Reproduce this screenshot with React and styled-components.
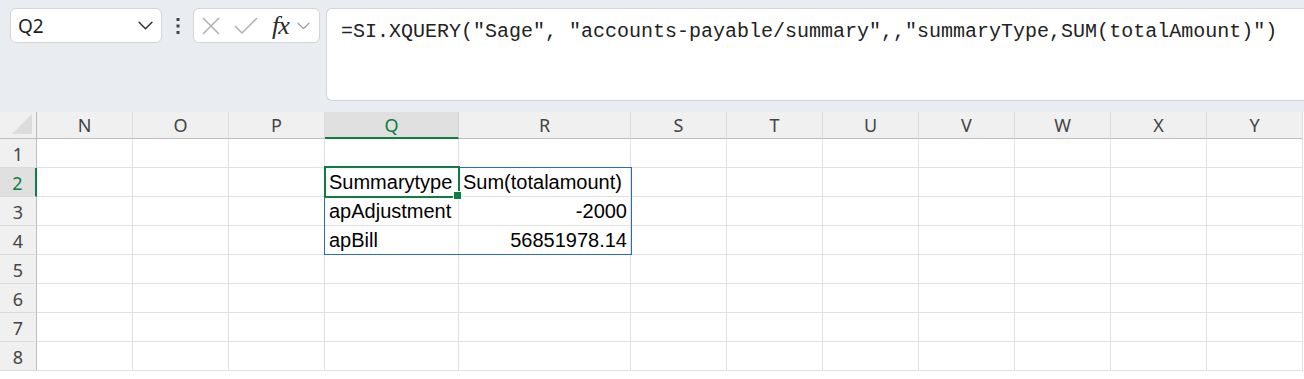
import React from "react";
import styled, { createGlobalStyle } from "styled-components";

const GlobalStyle = createGlobalStyle`
  html, body {
    margin: 0;
    padding: 0;
    background: #ffffff;
    overflow: hidden;
  }
  * { box-sizing: border-box; }
`;

const Page = styled.div`
  width: 1304px;
  height: 379px;
  overflow: hidden;
  font-family: "Noto Sans", "Open Sans", sans-serif;
`;

const TopBar = styled.div`
  height: 112px;
  background: #e9ecf0;
  display: flex;
  align-items: flex-start;
  padding: 8px 0 0 10px;
`;

const Box = styled.div`
  background: #fff;
  border: 1px solid #d2d4d7;
  border-radius: 6px;
  height: 35px;
  display: flex;
  align-items: center;
`;

const NameBox = styled(Box)`
  width: 152px;
  padding: 0 8px 0 7px;
  justify-content: space-between;
  font-size: 19px;
  color: #1f1f1f;
`;

const Dots = styled.div`
  width: 31px;
  height: 35px;
  display: flex;
  align-items: center;
  justify-content: center;
`;

const FxBox = styled(Box)`
  width: 127px;
  padding: 0 0 0 8px;
`;

const FxLabel = styled.span`
  font-family: "Liberation Serif", "DejaVu Serif", serif;
  font-style: italic;
  font-size: 26px;
  color: #2b2b2b;
  margin: 0 8px 0 14px;
  letter-spacing: -1px;
  line-height: 1;
`;

const FormulaInput = styled(Box)`
  margin-left: 6px;
  flex: 1;
  height: 93px;
  border-right: none;
  border-radius: 6px 0 0 6px;
  align-items: flex-start;
  padding: 11px 0 0 14px;
  font-family: "Liberation Mono", "DejaVu Sans Mono", monospace;
  font-size: 20px;
  color: #222;
  white-space: pre;
`;

const SheetWrap = styled.div`
  position: relative;
`;

const Grid = styled.div`
  display: grid;
  grid-template-columns: 37px 96px 96px 96px 134px 172px 96px 96px 96px 96px 96px 96px 96px;
  grid-template-rows: 27px repeat(8, 29px);
`;

const Corner = styled.div`
  background: #f0f0f0;
  border-right: 1px solid #bdbdbd;
  border-bottom: 1px solid #bdbdbd;
  position: relative;
  &::after {
    content: "";
    position: absolute;
    right: 4px;
    bottom: 4px;
    border-style: solid;
    border-width: 0 0 20px 20px;
    border-color: transparent transparent #dcdcdc transparent;
  }
`;

const ColHead = styled.div`
  background: ${(p) => (p.$active ? "#e0e0e0" : "#f0f0f0")};
  border-right: 1px solid ${(p) => (p.$active ? "#d4d4d4" : "#dcdcdc")};
  border-bottom: ${(p) => (p.$active ? "2px solid #107c41" : "1px solid #bdbdbd")};
  color: ${(p) => (p.$active ? "#107c41" : "#444")};
  font-size: 18px;
  display: flex;
  align-items: center;
  justify-content: center;
  padding-top: ${(p) => (p.$active ? "1px" : "0")};
`;

const RowHead = styled.div`
  background: ${(p) => (p.$active ? "#e0e0e0" : "#f0f0f0")};
  border-right: ${(p) => (p.$active ? "2px solid #107c41" : "1px solid #bdbdbd")};
  border-bottom: 1px solid #dcdcdc;
  color: ${(p) => (p.$active ? "#107c41" : "#444")};
  font-size: 18px;
  display: flex;
  align-items: center;
  justify-content: center;
  padding-top: 1px;
`;

const Cell = styled.div`
  border-right: 1px solid #e1e1e1;
  border-bottom: 1px solid #e1e1e1;
  font-family: "Liberation Sans", Arial, sans-serif;
  font-size: 20px;
  color: #000;
  display: flex;
  align-items: flex-end;
  justify-content: ${(p) => (p.$num ? "flex-end" : "flex-start")};
  padding: 0 3px 2px 4px;
  white-space: nowrap;
`;

const RangeBox = styled.div`
  position: absolute;
  left: 324px;
  top: 55px;
  width: 308px;
  height: 88px;
  border: 1px solid #2a6ac0;
  pointer-events: none;
`;

const Selection = styled.div`
  position: absolute;
  left: 324px;
  top: 54px;
  width: 136px;
  height: 32px;
  border: 2px solid #107c41;
  pointer-events: none;
  &::after {
    content: "";
    position: absolute;
    right: -4px;
    bottom: -4px;
    width: 7px;
    height: 7px;
    background: #107c41;
    border: 1px solid #fff;
  }
`;

const Chevron = ({ size = 14, color = "#333" }) => (
  <svg width={size} height={size * 0.6} viewBox="0 0 14 8" fill="none">
    <path d="M1 1l6 6 6-6" stroke={color} strokeWidth="1.4" strokeLinecap="round" strokeLinejoin="round" />
  </svg>
);

const cols = ["N", "O", "P", "Q", "R", "S", "T", "U", "V", "W", "X", "Y"];
const data = {
  2: { Q: "Summarytype", R: "Sum(totalamount)" },
  3: { Q: "apAdjustment", R: "-2000" },
  4: { Q: "apBill", R: "56851978.14" },
};

export default function App() {
  return (
    <Page>
      <GlobalStyle />
      <TopBar>
        <NameBox>
          <span>Q2</span>
          <Chevron size={15} color="#333" />
        </NameBox>
        <Dots>
          <svg width="4" height="18" viewBox="0 0 4 18">
            <rect x="0.5" y="1" width="3" height="3" fill="#444" />
            <rect x="0.5" y="7.5" width="3" height="3" fill="#444" />
            <rect x="0.5" y="14" width="3" height="3" fill="#444" />
          </svg>
        </Dots>
        <FxBox>
          <svg width="18" height="18" viewBox="0 0 18 18">
            <path d="M1 1l16 16M17 1L1 17" stroke="#b0b0b0" strokeWidth="1.5" />
          </svg>
          <svg width="24" height="18" viewBox="0 0 24 18" style={{ marginLeft: 14 }}>
            <path d="M1 9l7 7L23 1" stroke="#b0b0b0" strokeWidth="1.5" fill="none" />
          </svg>
          <FxLabel>fx</FxLabel>
          <Chevron size={13} color="#999" />
        </FxBox>
        <FormulaInput>{'=SI.XQUERY("Sage", "accounts-payable/summary",,"summaryType,SUM(totalAmount)")'}</FormulaInput>
      </TopBar>
      <SheetWrap>
        <Grid>
          <Corner />
          {cols.map((c) => (
            <ColHead key={c} $active={c === "Q"}>
              {c}
            </ColHead>
          ))}
          {[1, 2, 3, 4, 5, 6, 7, 8].map((r) => (
            <React.Fragment key={r}>
              <RowHead $active={r === 2}>{r}</RowHead>
              {cols.map((c) => {
                const v = data[r] && data[r][c];
                return (
                  <Cell key={c} $num={c === "R" && r > 2}>
                    {v}
                  </Cell>
                );
              })}
            </React.Fragment>
          ))}
        </Grid>
        <RangeBox />
        <Selection />
      </SheetWrap>
    </Page>
  );
}
